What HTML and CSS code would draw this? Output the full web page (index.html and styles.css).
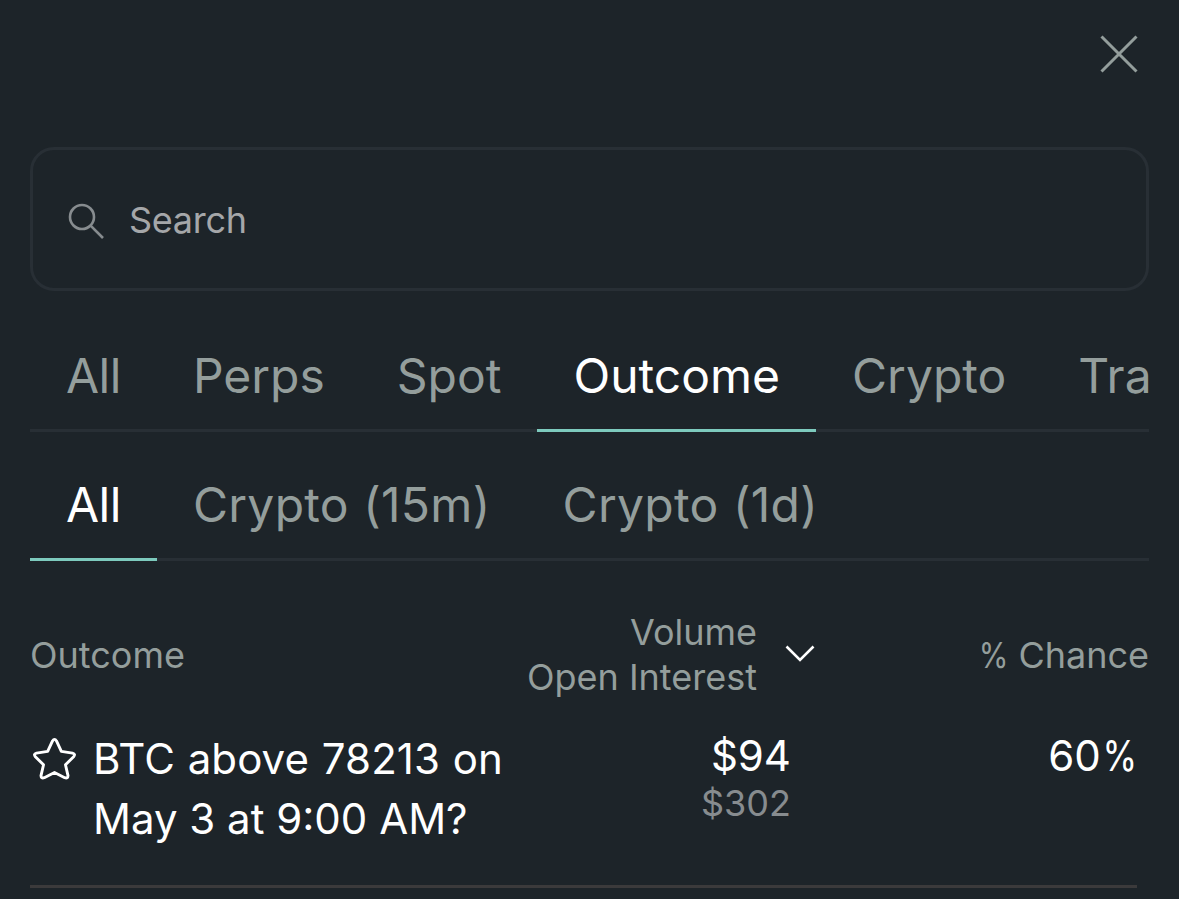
FILE: index.html
```html
<!DOCTYPE html>
<html lang="en">
<head>
    <meta charset="UTF-8">
    <meta name="viewport" content="width=device-width, initial-scale=1.0">
    <title>Select Market</title>
    <link rel="stylesheet" href="styles.css">
</head>
<body>
    <div class="modal">
        <div class="modal-header">
            <svg class="close-icon" viewBox="0 0 40 40">
                <path d="M2.5 2.5 L37.5 37.5 M37.5 2.5 L2.5 37.5"/>
            </svg>
        </div>

        <!-- Search -->
        <div class="search-box">
            <svg class="search-icon" viewBox="0 0 38 38">
                <circle cx="14" cy="14" r="12"/>
                <path d="M22.6 22.6 L35 35"/>
            </svg>
            <span class="search-text">Search</span>
        </div>

        <!-- Market types -->
        <div class="tabs">
            <div class="tab tab-all">All</div>
            <div class="tab">Perps</div>
            <div class="tab">Spot</div>
            <div class="tab active">Outcome</div>
            <div class="tab">Crypto</div>
            <div class="tab">Tra</div>
        </div>

        <!-- Outcome categories -->
        <div class="tabs sub-tabs">
            <div class="tab tab-all active">All</div>
            <div class="tab">Crypto (15m)</div>
            <div class="tab">Crypto (1d)</div>
        </div>

        <div class="table-header">
            <div class="col-name">Outcome</div>
            <div class="col-volume">
                <div>Volume<br>Open Interest</div>
                <svg class="sort-icon" viewBox="0 0 30 18">
                    <path d="M1.5 1.5 L15 15 L28.5 1.5"/>
                </svg>
            </div>
            <div class="col-chance"><span class="percent">%</span> Chance</div>
        </div>

        <div class="table-row">
            <div class="col-name">
                <svg class="star-icon" viewBox="0 0 48 48">
                    <path d="M21.9 4.2 Q24 0.8 26.1 4.2 L31.3 15.4 L43.2 17.2 Q46.8 18.2 44.4 21 L35.7 29.6 L38.4 41.2 Q38.3 44.6 34.9 43.4 L24 37.9 L13.1 43.4 Q9.7 44.6 9.6 41.2 L12.3 29.6 L3.6 21 Q1.2 18.2 4.8 17.2 L16.7 15.4 Z"/>
                </svg>
                <div class="name"><span class="market">BTC above 78213 on</span> May 3 at 9:00 AM?</div>
            </div>
            <div class="col-volume">
                <div class="volume">$94</div>
                <div class="interest">$302</div>
            </div>
            <div class="col-chance">60<span class="percent">%</span></div>
        </div>
    </div>
</body>
</html>
```
FILE: styles.css
```css
* {
    box-sizing: border-box;
}
body {
    background-color: #1d2429;
    font-family: Inter, sans-serif;
    color: #fff;
    margin: 0;
    height: 899px;
    overflow: hidden;
}
svg {
    fill: none;
    flex-shrink: 0;
}
.modal {
    padding: 0 30px;
}
.modal-header {
    display: flex;
    justify-content: flex-end;
    height: 147px;
    padding: 34px 10px 0 0;
}
.close-icon {
    width: 40px;
    height: 40px;
    stroke: #949e9c;
    stroke-width: 3;
}
.search-box {
    display: flex;
    align-items: center;
    gap: 23px;
    height: 144px;
    padding: 3px 35px 2px;
    border: 3px solid #282f35;
    border-radius: 24px;
}
.search-icon {
    width: 38px;
    height: 38px;
    margin-top: 4px;
    stroke: #878c8f;
    stroke-width: 2.6;
}
.search-text {
    font-size: 36px;
    letter-spacing: -0.3px;
    color: #a5a7a9;
}
.tabs {
    display: flex;
    height: 129px;
    border-bottom: 3px solid #282f35;
    color: #949e9c;
    font-size: 48px;
    white-space: nowrap;
}
.search-box + .tabs {
    height: 141px;
    padding-top: 12px;
}
.tab {
    height: 129px;
    padding: 44px 36px 0;
    line-height: 58px;
    border-bottom: 3px solid transparent;
}
.sub-tabs .tab {
    letter-spacing: 0.3px;
    word-spacing: 0.5px;
}
.tabs .tab-all {
    letter-spacing: -0.5px;
}
.tab.active {
    color: #fff;
    border-bottom-color: #7dcabd;
}
.table-header {
    display: flex;
    align-items: center;
    height: 189px;
    color: #949e9c;
    font-size: 36px;
    line-height: 45px;
}
.table-header .col-name {
    width: 440px;
}
.table-header .col-volume {
    display: flex;
    align-items: center;
    justify-content: flex-end;
    gap: 28px;
    width: 345px;
    margin-top: -2px;
    text-align: right;
}
.sort-icon {
    width: 30px;
    height: 18px;
    margin-top: -2px;
    stroke: #fff;
    stroke-width: 2.6;
}
.table-header .col-chance {
    flex: 1;
    text-align: right;
}
.table-row {
    display: flex;
    width: 1107px;
    height: 159px;
    margin-top: -21px;
    border-bottom: 3px solid #3b3a3b;
    font-size: 42px;
}
.table-row .col-name {
    display: flex;
    gap: 16px;
    width: 500px;
    padding-left: 2px;
    line-height: 60px;
}
.star-icon {
    width: 45px;
    height: 45px;
    margin-top: 8px;
    stroke: #fff;
    stroke-width: 3.1;
    stroke-linejoin: round;
}
.market {
    letter-spacing: 0.1px;
    word-spacing: 0.8px;
}
.table-row .col-volume {
    width: 261px;
    text-align: right;
    line-height: 54px;
}
.interest {
    color: #878c8f;
    font-size: 36px;
    line-height: 41px;
}
.table-row .col-chance {
    flex: 1;
    text-align: right;
    line-height: 54px;
}
/* slightly condensed percent sign */
.percent {
    display: inline-block;
    transform: scaleX(0.84);
    transform-origin: right;
    margin-left: -5px;
}
```
